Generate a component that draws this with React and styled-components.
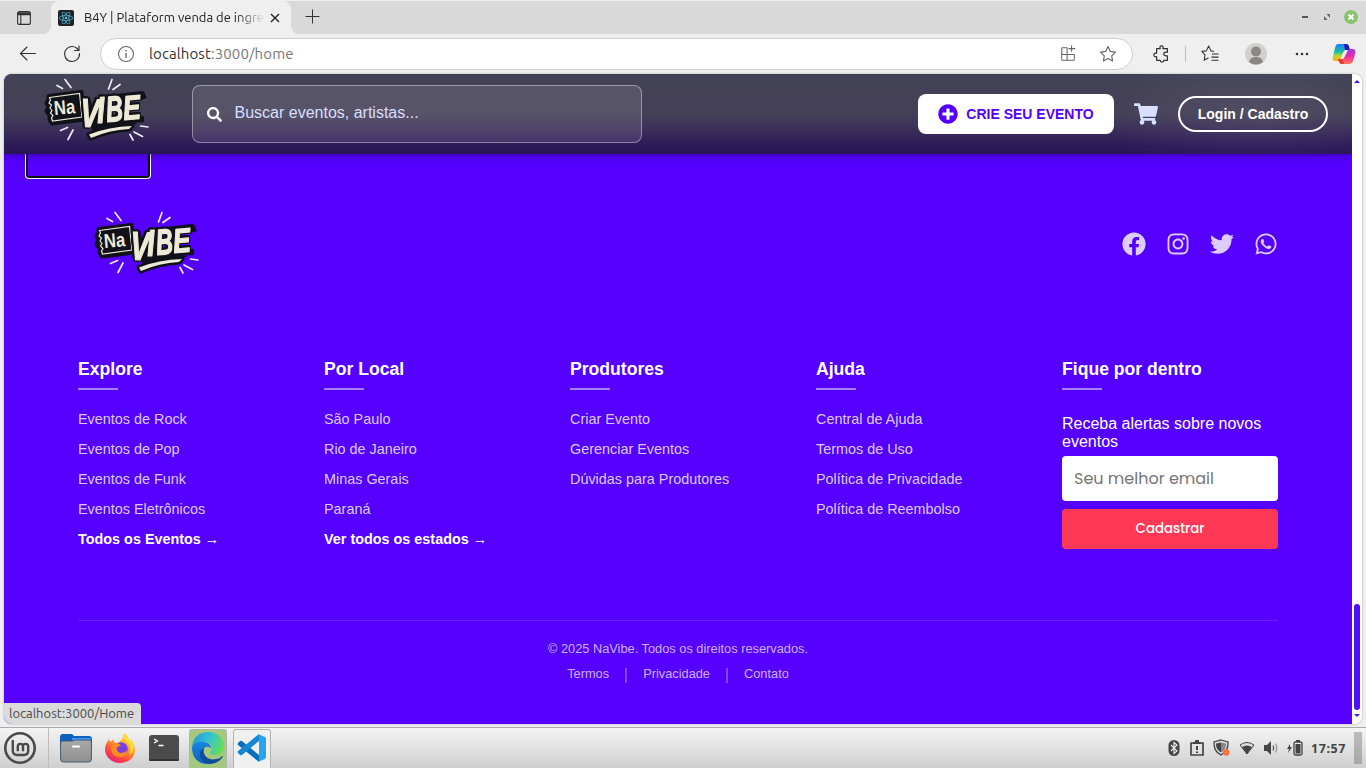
import React from "react";
import styled, { createGlobalStyle } from "styled-components";
import {
  FaSearch,
  FaPlusCircle,
  FaShoppingCart,
  FaFacebook,
  FaInstagram,
  FaTwitter,
  FaWhatsapp,
  FaReact,
} from "react-icons/fa";

const GlobalStyle = createGlobalStyle`
  * { box-sizing: border-box; }
  body { margin: 0; background: #efefef; font-family: "Liberation Sans", Arial, sans-serif; overflow: hidden; }
  a { color: inherit; text-decoration: none; }
  ul { list-style: none; margin: 0; padding: 0; }
  svg { display: block; flex: none; }
`;

const ui = `"Ubuntu", "Noto Sans", sans-serif`;

const Desktop = styled.div`
  width: 1366px;
  height: 768px;
  display: flex;
  flex-direction: column;
  overflow: hidden;
  background: #efefef;
`;

/* ---------- Browser chrome ---------- */

const TabStrip = styled.div`
  height: 34px;
  background: #d9d9d9;
  border-top: 1px solid #efefef;
  display: flex;
  align-items: stretch;
`;

const TabActions = styled.div`
  width: 51px;
  padding-left: 17px;
  display: flex;
  align-items: center;
  background: #d9d9d9;
  border-bottom-right-radius: 8px;
`;

const TabCorner = styled.div`
  width: ${(p) => p.$w}px;
  background: #efefef;
  display: flex;
`;

const Tab = styled.div`
  width: 240px;
  padding: 0 7px;
  display: flex;
  align-items: center;
  background: #efefef;
  border-radius: 8px 8px 0 0;
`;

const Favicon = styled.div`
  width: 16px;
  height: 16px;
  border-radius: 2px;
  background: #20232a;
  color: #53c1de;
  font-size: 14px;
  display: grid;
  place-items: center;
`;

const TabTitle = styled.div`
  width: 182px;
  margin: -2px 0 0 10px;
  font: 13px ${ui};
  color: #222;
  white-space: nowrap;
  overflow: hidden;
  mask-image: linear-gradient(to right, #000 152px, transparent 181px);
`;

const TabFill = styled.div`
  flex: 1;
  background: #d9d9d9;
  border-bottom-left-radius: 8px;
  display: flex;
  align-items: center;
  padding: 0 8px 2px 14px;
`;

const WindowButtons = styled.div`
  margin-left: auto;
  display: flex;
  align-items: center;
  gap: 13px;
`;

const Toolbar = styled.div`
  height: 40px;
  display: flex;
  align-items: center;
  padding-left: 19px;
`;

const AddressBar = styled.div`
  width: 1033px;
  height: 32px;
  margin-left: 19px;
  padding: 0 15px 0 16px;
  border: 1px solid #cfcfcf;
  border-radius: 16px;
  background: #fff;
  display: flex;
  align-items: center;
  gap: 14px;
`;

const Url = styled.div`
  flex: 1;
  padding-bottom: 1px;
  font: 15px ${ui};
  color: #777;
  letter-spacing: 0.1px;
  b { color: #333; font-weight: 400; }
`;

const ToolbarIcons = styled.div`
  display: flex;
  align-items: center;
  margin-left: 20px;
`;

const Divider = styled.span`
  width: 1px;
  height: 16px;
  margin: 0 15px 0 14px;
  background: #bcbcbc;
`;

const Avatar = styled.span`
  margin: 0 27px 0 26px;
`;

const More = styled.span`
  margin-right: 22px;
`;

/* ---------- Web page ---------- */

const Viewport = styled.div`
  position: relative;
  height: 650px;
  margin: 0 4px 4px;
  display: flex;
  border-radius: 8px;
  overflow: hidden;
  background: #fff;
  box-shadow: 0 0 2px #999;
`;

const Page = styled.div`
  width: 1348px;
  overflow: hidden;
  background: #5500ff;
  color: #fff;
`;

const Header = styled.header`
  position: relative;
  height: 80px;
  padding: 0 24px 0 36px;
  display: flex;
  align-items: center;
  background:
    radial-gradient(ellipse 150px 60px at 1250px 42px, rgba(255, 255, 255, 0.07), transparent),
    linear-gradient(#444257 0%, #444057 50%, #392c59 72%, #2b1a58 90%, #281655 100%);
  box-shadow: 0 2px 8px rgba(20, 0, 70, 0.4);
`;

const LogoLink = styled.a`
  display: block;
  padding-bottom: ${(p) => p.$lift}px;
`;

const SearchBox = styled.div`
  width: 450px;
  height: 58px;
  margin-left: 42px;
  padding: 0 14px;
  display: flex;
  align-items: center;
  gap: 12.5px;
  border: 1px solid rgba(255, 255, 255, 0.4);
  border-radius: 8px;
  background: rgba(255, 255, 255, 0.1);
  font-size: 16px;
  color: #d9dfff;
  svg { color: #fff; font-size: 15px; }
  span { padding-bottom: 3px; }
`;

const HeaderActions = styled.div`
  margin-left: auto;
  display: flex;
  align-items: center;
  gap: 20px;
`;

const CreateButton = styled.button`
  width: 196px;
  height: 40px;
  padding: 0;
  display: flex;
  align-items: center;
  justify-content: center;
  gap: 8px;
  border: 0;
  border-radius: 8px;
  background: #fff;
  color: #5500ff;
  font: bold 14px "Liberation Sans", sans-serif;
  white-space: nowrap;
  svg { font-size: 20px; }
`;

const Cart = styled.span`
  color: #d9e0ff;
  font-size: 24px;
`;

const LoginButton = styled.button`
  width: 150px;
  height: 36px;
  padding: 0;
  border: 2px solid #fff;
  border-radius: 18px;
  background: transparent;
  color: #fff;
  font: bold 14px "Liberation Sans", sans-serif;
  white-space: nowrap;
`;

const FocusFrame = styled.div`
  width: 126px;
  height: 25px;
  margin-left: 21px;
  border: 1px solid #fff;
  border-top: 0;
  border-radius: 0 0 4px 4px;
  box-shadow: inset 0 -2px 0 #101010, inset 2px 0 0 #101010, inset -2px 0 0 #101010;
`;

const Footer = styled.footer`
  width: 1200px;
  margin: 0 auto;
`;

const FooterTop = styled.div`
  height: 130px;
  padding-left: 12px;
  display: flex;
  justify-content: space-between;
  align-items: center;
`;

const Social = styled.div`
  display: flex;
  gap: 20px;
  font-size: 24px;
  color: rgba(255, 255, 255, 0.8);
`;

const Columns = styled.div`
  height: 312px;
  padding-top: 50px;
  display: grid;
  grid-template-columns: repeat(5, 1fr);
  gap: 30px;
  border-bottom: 1px solid rgba(255, 255, 255, 0.12);
`;

const Heading = styled.h4`
  margin: 0 0 20px;
  font-size: 17.6px;
  line-height: 20px;
  white-space: nowrap;
  &::after {
    content: "";
    display: block;
    width: 40px;
    height: 2px;
    margin-top: 9px;
    background: rgba(255, 255, 255, 0.5);
  }
`;

const FooterLink = styled.li`
  height: 30px;
  line-height: 19px;
  font-size: 14.4px;
  white-space: nowrap;
  font-weight: ${(p) => (p.$strong ? "bold" : "normal")};
  color: ${(p) => (p.$strong ? "#fff" : "rgba(255,255,255,0.8)")};
`;

const NewsletterText = styled.p`
  margin: 25px 0 5px;
  font-size: 16px;
  line-height: 18px;
  color: #fff;
`;

const EmailInput = styled.input`
  display: block;
  width: 100%;
  height: 45px;
  padding: 0 12px;
  border: 0;
  border-radius: 4px;
  background: #fff;
  font: 16px "Poppins", "Inter", sans-serif;
  &::placeholder { color: #757575; opacity: 1; }
`;

const SubmitButton = styled.button`
  display: block;
  width: 100%;
  height: 40px;
  margin-top: 8px;
  padding: 0;
  border: 0;
  border-radius: 4px;
  background: #ff3855;
  color: #fff;
  font: 500 13.333px "Poppins", "Inter", sans-serif;
`;

const Legal = styled.div`
  padding-top: 20px;
  display: flex;
  flex-direction: column;
  align-items: center;
  gap: 9px;
  font-size: 12.8px;
  line-height: 16px;
  color: rgba(255, 255, 255, 0.7);
`;

const LegalLinks = styled.div`
  display: flex;
  align-items: flex-start;
  gap: 16px;
`;

const LegalSeparator = styled.span`
  width: 2px;
  height: 15px;
  margin-top: 2px;
  background: rgba(255, 255, 255, 0.27);
`;

const Scrollbar = styled.div`
  width: 10px;
  padding: 5px 0 7px;
  display: flex;
  flex-direction: column;
  align-items: center;
  background: #fff;
`;

const Thumb = styled.div`
  width: 6px;
  height: 106px;
  margin: auto 0 3px;
  border-radius: 3px;
  background: #4c10ff;
`;

const StatusBubble = styled.div`
  position: absolute;
  left: 0;
  bottom: 0;
  width: 137px;
  height: 21px;
  padding-left: 5px;
  border-top-right-radius: 4px;
  background: #dadada;
  color: #4a4a4a;
  font: 13px/20px ${ui};
  white-space: nowrap;
`;

/* ---------- Taskbar ---------- */

const Taskbar = styled.div`
  height: 41px;
  margin-top: -1px;
  border-top: 1px solid #aaa;
  background: linear-gradient(#f4f4f4, #cfcfcf);
  display: flex;
  align-items: center;
`;

const StartButton = styled.div`
  width: 49px;
  height: 40px;
  padding: 3px 0 0 3px;
  border-right: 1px solid #bcbcbc;
`;

const AppButton = styled.div`
  width: 38px;
  height: 39px;
  margin-left: ${(p) => p.$ml || 6}px;
  padding-bottom: 2px;
  display: flex;
  justify-content: center;
  align-items: center;
  align-self: flex-end;
  border-radius: 3px 3px 0 0;
  background: ${(p) => ({ active: "#a5c87f", open: "#f0f0f0" })[p.$state] || "transparent"};
  border: 1px solid ${(p) => (p.$state ? "#b1b5ad" : "transparent")};
  border-bottom: 0;
`;

const Tray = styled.div`
  margin-left: auto;
  display: flex;
  align-items: center;
  color: #444;
`;

const TrayIcon = styled.span`
  margin-right: ${(p) => p.$mr}px;
`;

const Clock = styled.span`
  width: 36px;
  margin-right: 7px;
  font: bold 12.5px "Noto Sans", sans-serif;
  letter-spacing: 0.55px;
  white-space: nowrap;
  color: #444;
`;

const ShowDesktop = styled.div`
  width: 8px;
  height: 32px;
  margin-right: 4px;
  background: linear-gradient(#bdbdbd, #a6a6a6);
`;

/* ---------- Drawings ---------- */

const Stroke = ({ size = 20, color = "#333", w = 1.2, children }) => (
  <svg width={size} height={size} viewBox="0 0 20 20" fill="none" stroke={color} strokeWidth={w} strokeLinecap="round" strokeLinejoin="round">
    {children}
  </svg>
);

const ToolIcon = styled.svg`
  margin-left: ${(p) => p.$ml || 0}px;
  fill: none;
  stroke: ${(p) => p.$color || "#333"};
  stroke-width: 1.15;
  stroke-linecap: round;
  stroke-linejoin: round;
`;

const LogoText = styled.text`
  font-family: "Liberation Sans", Arial, sans-serif;
  font-weight: bold;
  font-style: ${(p) => (p.$slant ? "italic" : "normal")};
  font-size: ${(p) => p.$size}px;
`;

const LogoSvg = styled.svg`
  overflow: visible;
`;

const OutlinedLetters = styled.g`
  fill: #eeead7;
  stroke: #eeead7;
  stroke-width: 1.3;
  stroke-linejoin: round;
  filter: drop-shadow(1.6px 0 0 #111119) drop-shadow(-1.6px 0 0 #111119)
    drop-shadow(0 1.6px 0 #111119) drop-shadow(0 -1.6px 0 #111119);
`;

const logoLetters = [
  { ch: "V", at: "translate(40 51.500) rotate(2) scale(.70 1)", size: 40 },
  { ch: "I", at: "translate(57.500 48) rotate(-3) scale(.75 1)", size: 37 },
  { ch: "B", at: "translate(67 47) rotate(-5) scale(.65 1)", size: 36 },
  { ch: "E", at: "translate(84 45) rotate(-5) scale(.77 1)", size: 34 },
];

const NaVibeLogo = () => (
  <LogoSvg width="110" height="70" viewBox="0 0 110 70">
    <path
      d="M17 10.500l5.500 3M25 4.500l6 8M72 4.500l-3.500 9.500M80 9.500l-7 5M20.500 55.500l7-3M28 64.500l5-9.500M90 59.500l3 5.500M94 57l8.500 4.500M100.500 51l7.500 1"
      stroke="#edeafa" strokeWidth="1.700" strokeLinecap="round"
    />
    <path d="M9 21.500L41 17.500 44 44 12 48 10 44 10 40 7 36 9 32 7 28 9 25z" fill="#111119" stroke="#111119" strokeWidth="5" strokeLinejoin="round" />
    <g fill="#111119" stroke="#111119" strokeWidth="6" strokeLinejoin="round">
      <path d="M49 59.500q20-8 43-8.500l-3 3q-20 1-38 9z" strokeWidth="5" />
      <path d="M47 23l7 28M55 50l7-28M65 23l0 26M76 22l26-3 2 5M74 46l30-2M52 54l44-8" />
    </g>
    <path d="M9.500 22.500L39.500 18.500 42 42 12.500 46 11.500 43 13 40.500 10.500 38 12 35.500 10 33 11.500 30 9 28 10.500 25z" fill="#111119" stroke="#e9e6d5" strokeWidth="1.200" />
    <g transform="translate(14.500 40) rotate(-5) scale(.83 1)" fill="#eeead7">
      <LogoText $size={20}>Na</LogoText>
    </g>
    <OutlinedLetters>
      {logoLetters.map((l) => (
        <g key={l.ch} transform={l.at}>
          <LogoText $size={l.size} $slant>{l.ch}</LogoText>
        </g>
      ))}
    </OutlinedLetters>
    <path d="M49 59.500q20-8 43-8.500l-3 3q-20 1-38 9z" fill="#eeead7" />
  </LogoSvg>
);

const TabMenuIcon = () => (
  <svg width="14" height="14" viewBox="0 0 14 14" fill="none" stroke="#333" strokeWidth="1.100">
    <rect x=".6" y=".6" width="12.800" height="12.800" rx="2" />
    <path d="M.6 3.600h12.800M3.800 3.600v9.800" />
    <path d="M1 2.200h12" strokeWidth="1.800" />
  </svg>
);

const CopilotIcon = () => (
  <svg width="24" height="24" viewBox="0 0 24 24">
    <defs>
      <linearGradient id="cpL" x1="0" y1="0" x2="0" y2="1">
        <stop offset="0" stopColor="#1c7ff5" /><stop offset=".45" stopColor="#16bda4" /><stop offset=".7" stopColor="#b9d636" /><stop offset="1" stopColor="#ffb000" />
      </linearGradient>
      <linearGradient id="cpR" x1="0" y1="0" x2="0" y2="1">
        <stop offset="0" stopColor="#9a35ef" /><stop offset=".5" stopColor="#f02a9f" /><stop offset="1" stopColor="#ff7a59" />
      </linearGradient>
    </defs>
    <path d="M6 2h8c2 0 3 1 3 3l1 3h-4c-2 0-2 1-3 3l-2 5c-1 2-2 3-4 3H4c-3 0-4-2-3-5l2-8c1-3 1-4 3-4z" fill="url(#cpL)" />
    <path d="M12 2h2c2 0 3 2 3 3l1 3h-5z" fill="#2b10c9" />
    <path d="M18 7h2c3 0 4 2 3 5l-2 7c-1 2-2 3-4 3h-7c-2 0-3-1-3-3l-1-2h4c2 0 2-1 3-3l2-4c1-2 1-3 3-3z" fill="url(#cpR)" />
    <path d="M6 17h4l2 5h-2c-2 0-3-2-4-5z" fill="#e8362c" />
  </svg>
);

const MintIcon = () => (
  <svg width="34" height="34" viewBox="0 0 34 34" fill="none" stroke="#4a4a4a" strokeLinecap="butt">
    <circle cx="17" cy="17" r="14.700" strokeWidth="2.600" />
    <path d="M9.800 9v10.500q0 4.500 4.500 4.500h6.600q4.300 0 4.300-4.500v-4q0-2.600-2.600-2.600t-2.600 2.600v4.800M20 15.500q0-2.600-2.600-2.600t-2.600 2.600v4.800" strokeWidth="2.400" />
  </svg>
);

const FolderIcon = () => (
  <svg width="32" height="30" viewBox="0 0 32 30">
    <defs>
      <linearGradient id="fold" x1="0" y1="0" x2="0" y2="1"><stop offset="0" stopColor="#aaa" /><stop offset="1" stopColor="#8e8e8e" /></linearGradient>
    </defs>
    <path d="M0 4q0-3 3-3h8q2 0 3 2h15q3 0 3 3v9H0z" fill="#1260bd" />
    <path d="M12 6h19" stroke="#3b9aff" strokeWidth="2" />
    <path d="M.6 10q0-2 2-2h10l2-1h14.800q2 0 2 2v17q0 3-3 3H3.600q-3 0-3-3z" fill="url(#fold)" stroke="#405b78" />
    <path d="M13 13.500h6" stroke="#fff" strokeWidth="2" strokeLinecap="round" />
  </svg>
);

const FirefoxIcon = () => (
  <svg width="32" height="32" viewBox="0 0 32 32">
    <defs>
      <linearGradient id="ffx" x1=".8" y1="0" x2=".2" y2="1">
        <stop offset="0" stopColor="#fff044" /><stop offset=".4" stopColor="#ffa02c" /><stop offset=".7" stopColor="#ff4b3c" /><stop offset="1" stopColor="#e3177f" />
      </linearGradient>
    </defs>
    <path d="M20 1c4 3 5 6 5 8 3 0 6 4 6 9 0 8-7 13-15 13S1 25 1 17c0-4 2-7 4-10l1 3 4-3c-1 3 1 4 3 4 4-1 6-5 7-10z" fill="url(#ffx)" />
    <circle cx="17" cy="17" r="6.800" fill="#7a3fe0" />
    <path d="M8 13c4-4 8-1 9 1-3 0-5 2-4 4 2 5 8 3 10 0 0 5-4 8-9 7-6-1-8-7-6-12z" fill="#ff8c22" />
    <path d="M20 1c-1 5 1 7 4 10s3 8 1 12c4-3 6-8 4-13-1-2-3-2-4-1 0-2-1-5-5-8z" fill="#ffdc35" />
  </svg>
);

const TerminalIcon = () => (
  <svg width="30" height="26" viewBox="0 0 30 26">
    <rect width="30" height="26" rx="3" fill="#4b4b4b" />
    <rect x="0" y="24" width="30" height="2" rx="1" fill="#333" />
    <path d="M5 4l3.500 2L5 8M9.500 10.500h5" fill="none" stroke="#fff" strokeWidth="1.300" />
  </svg>
);

const EdgeIcon = () => (
  <svg width="34" height="34" viewBox="0 0 34 34">
    <defs>
      <linearGradient id="edgA" x1="0" y1=".3" x2="1" y2=".6">
        <stop offset="0" stopColor="#2399de" /><stop offset=".5" stopColor="#35c4cf" /><stop offset="1" stopColor="#68df50" />
      </linearGradient>
      <linearGradient id="edgB" x1="0" y1="0" x2="0" y2="1"><stop offset="0" stopColor="#1b86df" /><stop offset="1" stopColor="#0b5fc0" /></linearGradient>
    </defs>
    <path d="M1 16C2 6 9 1 17 1c10 0 16 7 16 14 0 6-4 9-9 9-4 0-6-2-5-3 4-4 1-10-5-10C8 11 3 13 1 16z" fill="url(#edgA)" />
    <path d="M1 17c1-5 6-7 11-6 5 0 8 3 8 6-5-3-8 0-8 4 0 6 5 11 10 11-2 1-4 1-6 1C7 33 1 26 1 17z" fill="url(#edgB)" />
    <path d="M13 17c-2 8 5 13 12 11 3 0 5-2 6-3 1 0 1 0 0 2-4 5-10 7-16 5-8-4-8-12-2-15z" fill="#114d9b" />
  </svg>
);

const CodeIcon = () => (
  <svg width="30" height="30" viewBox="0 0 30 30">
    <path d="M1 10l2-2q1-.6 2 0l17 14v7L1 12q-1-1 0-2z" fill="#0871bd" />
    <path d="M1 20l2 2q1 .6 2 0L22 8V1L1 18q-1 1 0 2z" fill="#1688d3" />
    <path d="M21 1l7 3q1 .5 1 2v18q0 1.500-1 2l-7 3q1-1 1-3V4q0-2-1-3z" fill="#2aa4ef" />
  </svg>
);

const BluetoothIcon = () => (
  <svg width="12" height="16" viewBox="0 0 12 16">
    <rect x=".5" width="11" height="16" rx="5.500" fill="#444" />
    <path d="M3 5l6 6-3 2.500v-11L9 5l-6 6" fill="none" stroke="#eee" strokeWidth="1.100" />
  </svg>
);

const UpdateIcon = () => (
  <svg width="14" height="16" viewBox="0 0 14 16">
    <path d="M1 3h12v12H1z" fill="none" stroke="#444" strokeWidth="1.700" />
    <path d="M5 0h4v2h2v2H3V2h2z" fill="#444" /><path d="M7 6v4M7 11.500v1.600" stroke="#444" strokeWidth="2" />
  </svg>
);

const ShieldIcon = () => (
  <svg width="18" height="18" viewBox="0 0 18 18">
    <path d="M8 1l7 2c0 6-1 10-7 13C2 13 1 9 1 3z" fill="#ddd" stroke="#444" strokeWidth="1.300" />
    <path d="M8 3.500v10C4 11 3 8 3 4.500z" fill="#444" /><path d="M8 3.500v10c4-2 5-5 5-9z" fill="#888" />
    <circle cx="13.300" cy="13.500" r="3.200" fill="#ff7139" />
  </svg>
);

const WifiIcon = () => (
  <svg width="16" height="14" viewBox="0 0 16 14">
    <path d="M1 4q7-5 14 0L8 13z" fill="#ddd" stroke="#444" /><path d="M3 6q5-3 10 0l-5 7z" fill="#444" />
  </svg>
);

const VolumeIcon = () => (
  <svg width="16" height="14" viewBox="0 0 16 14" fill="none">
    <path d="M1 4h3l4-4v14l-4-4H1z" fill="#444" />
    <path d="M10 4.500q1.500 2.500 0 5" stroke="#555" strokeWidth="1.300" /><path d="M12.300 2.500q3 4.500 0 9" stroke="#999" strokeWidth="1.300" />
  </svg>
);

const BatteryIcon = () => (
  <svg width="17" height="16" viewBox="0 0 17 16">
    <path d="M4 4L1 9h2l-1 4 4-6H4z" fill="#444" />
    <rect x="8" y="2" width="8" height="13" rx="1.500" fill="none" stroke="#444" strokeWidth="1.300" />
    <path d="M10 0h4v2h-4zM9.500 4h5v9.500h-5z" fill="#444" />
  </svg>
);

/* ---------- Content ---------- */

const columns = [
  { title: "Explore", links: ["Eventos de Rock", "Eventos de Pop", "Eventos de Funk", "Eventos Eletrônicos"], more: "Todos os Eventos →" },
  { title: "Por Local", links: ["São Paulo", "Rio de Janeiro", "Minas Gerais", "Paraná"], more: "Ver todos os estados →" },
  { title: "Produtores", links: ["Criar Evento", "Gerenciar Eventos", "Dúvidas para Produtores"] },
  { title: "Ajuda", links: ["Central de Ajuda", "Termos de Uso", "Política de Privacidade", "Política de Reembolso"] },
];

function BrowserChrome() {
  return (
    <>
      <TabStrip>
        <TabCorner $w={51}><TabActions><TabMenuIcon /></TabActions></TabCorner>
        <Tab>
          <Favicon><FaReact /></Favicon>
          <TabTitle>B4Y | Plataform venda de ingre</TabTitle>
          <svg width="18" height="18" viewBox="0 0 18 18" stroke="#222" strokeWidth="1.400"><path d="M5 5l8 8M13 5l-8 8" /></svg>
        </Tab>
        <TabCorner $w={1075}>
          <TabFill>
            <svg width="15" height="15" viewBox="0 0 15 15" stroke="#333" strokeWidth="1"><path d="M7.500 .5v14M.5 7.500h14" /></svg>
            <WindowButtons>
              <svg width="8" height="8" viewBox="0 0 8 8"><path d="M1 4h6" stroke="#555" strokeWidth="2" /></svg>
              <svg width="9" height="8" viewBox="0 0 9 8"><path d="M4.500 1H8v4zM2 3L5.500 7H2z" fill="#666" /></svg>
              <svg width="14" height="14" viewBox="0 0 14 14"><circle cx="7" cy="7" r="7" fill="#87c36b" /><path d="M4.500 4.500l5 5M9.500 4.500l-5 5" stroke="#fff" strokeWidth="2" /></svg>
            </WindowButtons>
          </TabFill>
        </TabCorner>
      </TabStrip>
      <Toolbar>
        <ToolIcon width="18" height="16" viewBox="0 0 18 16"><path d="M1.500 7.500h15M8 1L1.500 7.500 8 14" /></ToolIcon>
        <ToolIcon $ml={26} width="18" height="18" viewBox="0 0 18 18"><path d="M16.500 8.500A7.500 7.500 0 1 1 13.500 3l2 2M16 1v4.500h-4.500" /></ToolIcon>
        <AddressBar>
          <svg width="18" height="18" viewBox="0 0 18 18" fill="none" stroke="#666" strokeWidth="1.100"><circle cx="9" cy="9" r="7.500" /><path d="M9 8v5M9 5v1.500" strokeWidth="1.300" /></svg>
          <Url><b>localhost</b>:3000/home</Url>
          <Stroke size={18} color="#666"><path d="M8.500 3H4q-1 0-1 1v12q0 1 1 1h12q1 0 1-1v-5.500M9 3v14M3 10.500h14M14 1v6M11 4h6.500" /></Stroke>
          <ToolIcon $ml={8} $color="#666" width="18" height="18" viewBox="0 0 18 18"><path d="M9 1.500l2.300 4.900 5.200.7-3.800 3.700.9 5.200L9 13.500 4.400 16l.9-5.200-3.800-3.700 5.200-.7z" /></ToolIcon>
        </AddressBar>
        <ToolbarIcons>
          <Stroke size={18} w={1.35}><path d="M4 4h4q-1-3 1.500-3T11 4h5v4h-1.500q-2.500 0-2.500 2t2.500 2H16v5h-4q0 2-2 2t-2-2H4v-4q-3 .5-3-2t3-2z" /></Stroke>
          <Divider />
          <Stroke size={18}><path d="M14 7l-3-.5L8.500 1 6 6.500 1 7l3.500 4-1 6L8 14.500M12.500 10H19M12 13.500h7M12 17h7" /></Stroke>
          <Avatar><svg width="22" height="22" viewBox="0 0 22 22"><circle cx="11" cy="11" r="11" fill="#d2d0cc" /><circle cx="11" cy="8.500" r="5" fill="#8a8784" /><path d="M4 19q1-5 7-5t7 5q-7 5-14 0z" fill="#8a8784" /></svg></Avatar>
          <More><svg width="16" height="4" viewBox="0 0 16 4" fill="#333"><circle cx="3" cy="2" r="1.300" /><circle cx="8" cy="2" r="1.300" /><circle cx="13" cy="2" r="1.300" /></svg></More>
          <CopilotIcon />
        </ToolbarIcons>
      </Toolbar>
    </>
  );
}

function SiteFooter() {
  return (
    <Footer>
      <FooterTop>
        <LogoLink $lift={2}><NaVibeLogo /></LogoLink>
        <Social><FaFacebook /><FaInstagram /><FaTwitter /><FaWhatsapp /></Social>
      </FooterTop>
      <Columns>
        {columns.map((c) => (
          <div key={c.title}>
            <Heading>{c.title}</Heading>
            <ul>
              {c.links.map((l) => <FooterLink key={l}>{l}</FooterLink>)}
              {c.more && <FooterLink $strong>{c.more}</FooterLink>}
            </ul>
          </div>
        ))}
        <div>
          <Heading>Fique por dentro</Heading>
          <NewsletterText>Receba alertas sobre novos eventos</NewsletterText>
          <EmailInput placeholder="Seu melhor email" />
          <SubmitButton>Cadastrar</SubmitButton>
        </div>
      </Columns>
      <Legal>
        <span>© 2025 NaVibe. Todos os direitos reservados.</span>
        <LegalLinks>
          <a>Termos</a>
          <LegalSeparator />
          <a>Privacidade</a>
          <LegalSeparator />
          <a>Contato</a>
        </LegalLinks>
      </Legal>
    </Footer>
  );
}

function SystemTaskbar() {
  return (
    <Taskbar>
      <StartButton><MintIcon /></StartButton>
      <AppButton $ml={8}><FolderIcon /></AppButton>
      <AppButton><FirefoxIcon /></AppButton>
      <AppButton><TerminalIcon /></AppButton>
      <AppButton $state="active"><EdgeIcon /></AppButton>
      <AppButton $state="open"><CodeIcon /></AppButton>
      <Tray>
        <TrayIcon $mr={10}><BluetoothIcon /></TrayIcon>
        <TrayIcon $mr={9}><UpdateIcon /></TrayIcon>
        <TrayIcon $mr={8}><ShieldIcon /></TrayIcon>
        <TrayIcon $mr={8}><WifiIcon /></TrayIcon>
        <TrayIcon $mr={7}><VolumeIcon /></TrayIcon>
        <TrayIcon $mr={8}><BatteryIcon /></TrayIcon>
        <Clock>17:57</Clock>
        <ShowDesktop />
      </Tray>
    </Taskbar>
  );
}

export default function App() {
  return (
    <Desktop>
      <GlobalStyle />
      <BrowserChrome />
      <Viewport>
        <Page>
          <Header>
            <LogoLink $lift={9}><NaVibeLogo /></LogoLink>
            <SearchBox><FaSearch /><span>Buscar eventos, artistas...</span></SearchBox>
            <HeaderActions>
              <CreateButton><FaPlusCircle />CRIE SEU EVENTO</CreateButton>
              <Cart><FaShoppingCart /></Cart>
              <LoginButton>Login / Cadastro</LoginButton>
            </HeaderActions>
          </Header>
          <FocusFrame />
          <SiteFooter />
        </Page>
        <Scrollbar>
          <svg width="6" height="4" viewBox="0 0 6 4"><path d="M0 4l3-3 3 3z" fill="#4c10ff" /></svg>
          <Thumb />
          <svg width="6" height="4" viewBox="0 0 6 4"><path d="M0 1h6L3 4z" fill="#4c10ff" /></svg>
        </Scrollbar>
        <StatusBubble>localhost:3000/Home</StatusBubble>
      </Viewport>
      <SystemTaskbar />
    </Desktop>
  );
}
